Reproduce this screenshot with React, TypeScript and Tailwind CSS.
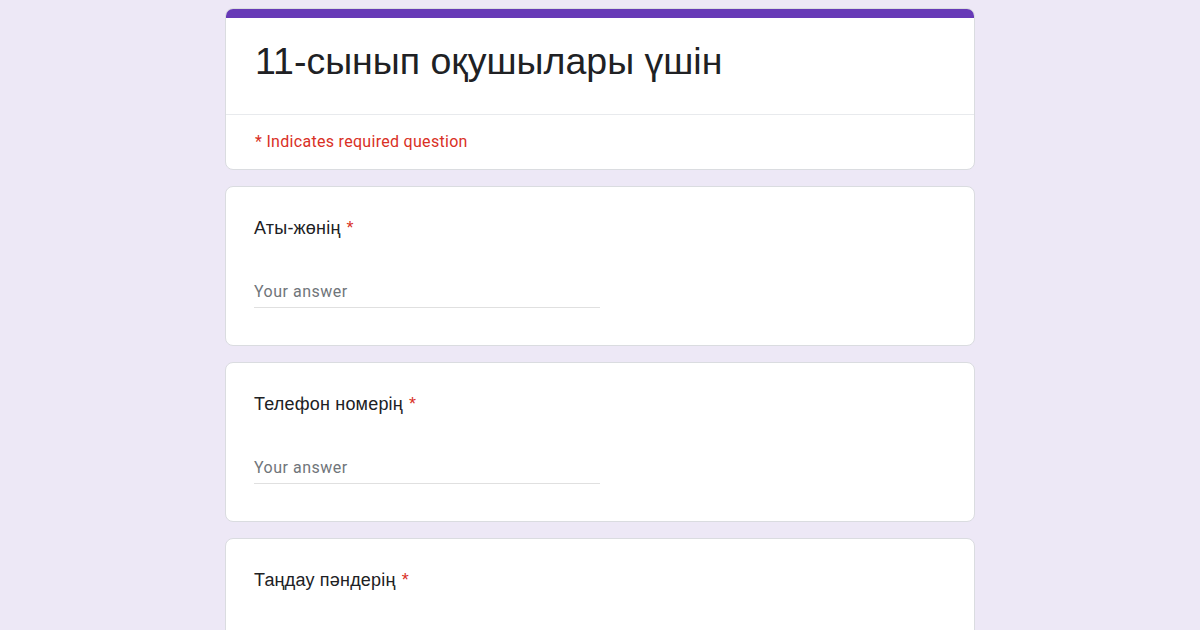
import React from "react";

function Question({ label }: { label: string }) {
  return (
    <div className="bg-white border border-[#dadce0] rounded-lg h-[160px] px-[28px] pt-[29px]">
      <div className="text-[18px] leading-6 text-[#202124] tracking-[0.2px]" style={{ fontFamily: '"Liberation Sans", Arial, sans-serif' }}>
        {label}
        <span className="text-[#d93025] ml-[6px]">*</span>
      </div>
      <div className="mt-[40px] w-[346px] border-b border-[#e0e0e0] pb-[3px]">
        <div className="text-[16px] leading-6 text-[#70757a] tracking-[0.5px]" style={{ fontFamily: 'Roboto, sans-serif' }}>
          Your answer
        </div>
      </div>
    </div>
  );
}

export default function App() {
  return (
    <div className="w-[1200px] h-[630px] overflow-hidden bg-[#ede8f6]">
      <div className="w-[750px] mx-auto pt-[8px] flex flex-col gap-[16px]">
        <div className="bg-white border border-[#dadce0] rounded-lg overflow-hidden">
          <div className="h-[10px] bg-[#673ab7] -mx-px -mt-px" />
          <div className="h-[97px] px-[29px] flex items-start pt-[21px] border-b border-[#e8eaed]">
            <div className="text-[37.5px] leading-[44px] text-[#202124]" style={{ fontFamily: '"Liberation Sans", Arial, sans-serif' }}>
              11-сынып оқушылары үшін
            </div>
          </div>
          <div className="h-[54px] px-[29px] pt-[15px]">
            <div className="text-[16px] leading-6 text-[#d93025] tracking-[0.3px]" style={{ fontFamily: 'Roboto, sans-serif' }}>
              * Indicates required question
            </div>
          </div>
        </div>
        <Question label="Аты-жөнің" />
        <Question label="Телефон номерің" />
        <Question label="Таңдау пәндерің" />
      </div>
    </div>
  );
}
